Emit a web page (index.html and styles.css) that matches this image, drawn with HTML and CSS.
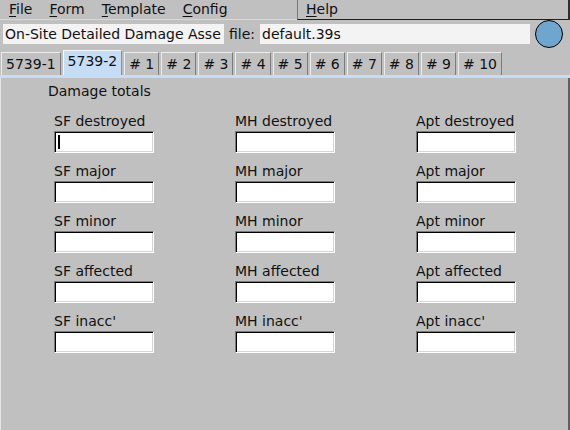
FILE: index.html
```html
<!DOCTYPE html>
<html>
<head>
<meta charset="utf-8">
<link rel="stylesheet" href="styles.css">
</head>
<body>
<div class="app">
  <div class="menubar">
    <div class="menu-left">
      <span class="menu-item"><u>F</u>ile</span>
      <span class="menu-item"><u>F</u>orm</span>
      <span class="menu-item"><u>T</u>emplate</span>
      <span class="menu-item"><u>C</u>onfig</span>
    </div>
    <div class="menu-right">
      <span class="menu-item"><u>H</u>elp</span>
    </div>
  </div>

  <div class="titlerow">
    <div class="title-entry">On-Site Detailed Damage Asse</div>
    <span class="file-label">file:</span>
    <div class="file-entry">default.39s</div>
    <div class="status-dot"></div>
  </div>

  <div class="tabs">
    <div class="tab">5739-1</div>
    <div class="tab selected">5739-2</div>
    <div class="tab"># 1</div>
    <div class="tab"># 2</div>
    <div class="tab"># 3</div>
    <div class="tab"># 4</div>
    <div class="tab"># 5</div>
    <div class="tab"># 6</div>
    <div class="tab"># 7</div>
    <div class="tab"># 8</div>
    <div class="tab"># 9</div>
    <div class="tab"># 10</div>
  </div>
  <div class="tabbar-line"></div>

  <div class="panel">
    <div class="section-title">Damage totals</div>
    <div class="fields">
      <div class="field"><div class="label">SF destroyed</div><div class="entry"><span class="cursor"></span></div></div>
      <div class="field"><div class="label">MH destroyed</div><div class="entry"></div></div>
      <div class="field"><div class="label">Apt destroyed</div><div class="entry"></div></div>

      <div class="field"><div class="label">SF major</div><div class="entry"></div></div>
      <div class="field"><div class="label">MH major</div><div class="entry"></div></div>
      <div class="field"><div class="label">Apt major</div><div class="entry"></div></div>

      <div class="field"><div class="label">SF minor</div><div class="entry"></div></div>
      <div class="field"><div class="label">MH minor</div><div class="entry"></div></div>
      <div class="field"><div class="label">Apt minor</div><div class="entry"></div></div>

      <div class="field"><div class="label">SF affected</div><div class="entry"></div></div>
      <div class="field"><div class="label">MH affected</div><div class="entry"></div></div>
      <div class="field"><div class="label">Apt affected</div><div class="entry"></div></div>

      <div class="field"><div class="label">SF inacc'</div><div class="entry"></div></div>
      <div class="field"><div class="label">MH inacc'</div><div class="entry"></div></div>
      <div class="field"><div class="label">Apt inacc'</div><div class="entry"></div></div>
    </div>
  </div>
</div>
</body>
</html>
```

FILE: styles.css
```css
* { box-sizing: border-box; }

html, body {
  margin: 0;
  padding: 0;
  background: #c0c0c0;
}

body {
  width: 570px;
  height: 430px;
  overflow: hidden;
  font-family: "DejaVu Sans", sans-serif;
  font-size: 14px;
  color: #111;
}

.app {
  display: flex;
  flex-direction: column;
  height: 430px;
}

/* menu bar */
.menubar {
  display: flex;
  height: 20px;
}

.menu-left {
  display: flex;
  gap: 1px;
  width: 297px;
  padding-left: 1px;
  border-bottom: 1px solid #d8d8d8;
}

.menu-right {
  display: flex;
  flex: 1;
  border-left: 1px solid #7a7a7a;
  border-bottom: 1px solid #202020;
  border-right: 2px solid #303030;
}

.menu-item {
  padding: 0 8px;
  line-height: 18px;
}

.menu-item u {
  text-decoration-thickness: 1px;
  text-underline-offset: 2px;
}

/* title row */
.titlerow {
  display: flex;
  align-items: center;
  height: 28px;
  padding-left: 3px;
}

.title-entry {
  width: 221px;
  height: 20px;
  line-height: 20px;
  padding-left: 2px;
  background: #f3f3f3;
  white-space: nowrap;
  overflow: hidden;
}

.file-label {
  margin-left: 5px;
  width: 31px;
}

.file-entry {
  width: 270px;
  height: 20px;
  line-height: 20px;
  padding-left: 2px;
  background: #f3f3f3;
}

.status-dot {
  width: 28px;
  height: 28px;
  margin-left: 5px;
  border-radius: 50%;
  background: #6ea6cf;
  border: 1px solid #000;
}

/* tabs */
.tabs {
  display: flex;
  align-items: flex-end;
  height: 25px;
  margin-top: 2px;
  padding-left: 1px;
}

.tab {
  height: 23px;
  line-height: 22px;
  padding: 0 4px;
  margin-right: 2px;
  border-top: 1px solid #ececec;
  border-left: 1px solid #ececec;
  border-right: 1px solid #7c7c7c;
  background: #c0c0c0;
  white-space: nowrap;
}

.tab.selected {
  height: 25px;
  line-height: 21px;
  background: #c6ddf6;
  border-top: 1px solid #f4f8fc;
  border-left: 1px solid #f4f8fc;
  border-right: 1px solid #8090a0;
}

.tabbar-line {
  height: 3px;
  background: #c6ddf6;
}

/* panel */
.panel {
  flex: 1;
  padding-top: 5px;
  border-left: 1px solid #e4e4e4;
  border-right: 2px solid #606060;
}

.section-title {
  padding-left: 47px;
  line-height: 17px;
}

.fields {
  display: grid;
  grid-template-columns: repeat(3, 181px);
  row-gap: 9px;
  margin-top: 12px;
  padding-left: 53px;
}

.label {
  line-height: 17px;
  padding-top: 1px;
  white-space: nowrap;
}

.entry {
  position: relative;
  width: 100px;
  height: 22px;
  margin-top: 1px;
  background: #fff;
  border-top: 1px solid #7a7a7a;
  border-left: 1px solid #7a7a7a;
  border-bottom: 1px solid #ffffff;
  border-right: 1px solid #ffffff;
  box-shadow: inset 1px 1px 0 #000, inset -1px -1px 0 #d4d4d4;
}

.cursor {
  position: absolute;
  left: 3px;
  top: 3px;
  width: 2px;
  height: 14px;
  background: #000;
}
```
